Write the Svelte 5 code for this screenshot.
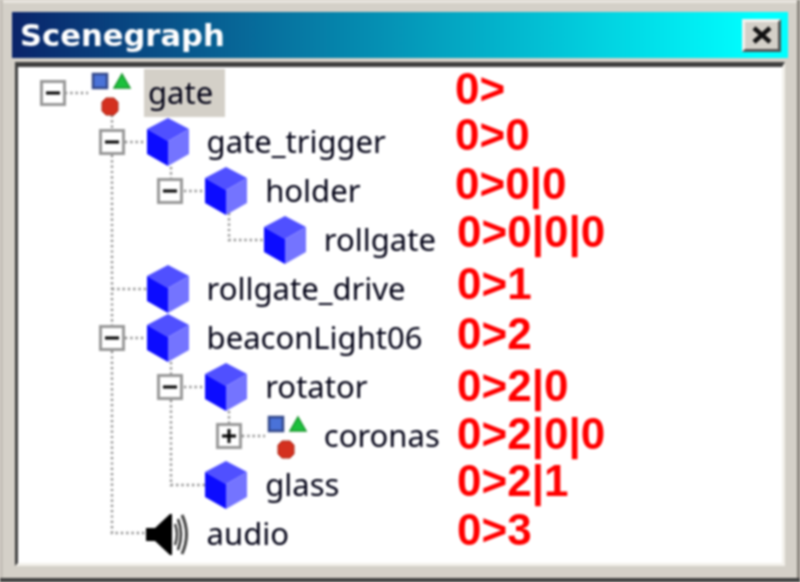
<script>
  const nodes = [
    { name: 'gate', depth: 0, toggle: 'minus', icon: 'shapes', path: '0>', h: 46, x: 0, selected: true },
    { name: 'gate_trigger', depth: 1, toggle: 'minus', icon: 'cube', path: '0>0', h: 49, x: 0 },
    { name: 'holder', depth: 2, toggle: 'minus', icon: 'cube', path: '0>0|0', h: 48, x: 0 },
    { name: 'rollgate', depth: 3, icon: 'cube', path: '0>0|0|0', h: 52, x: 2 },
    { name: 'rollgate_drive', depth: 1, icon: 'cube', path: '0>1', h: 50, x: 2 },
    { name: 'beaconLight06', depth: 1, toggle: 'minus', icon: 'cube', path: '0>2', h: 52, x: 2 },
    { name: 'rotator', depth: 2, toggle: 'minus', icon: 'cube', path: '0>2|0', h: 48, x: 2 },
    { name: 'coronas', depth: 3, toggle: 'plus', icon: 'shapes', path: '0>2|0|0', h: 47, x: 2 },
    { name: 'glass', depth: 2, icon: 'cube', path: '0>2|1', h: 49, x: 2 },
    { name: 'audio', depth: 1, icon: 'speaker', path: '0>3', h: 49, x: 2 }
  ];

  // connector dots, in window coordinates
  const lines = [
    'M65 93H88', 'M112 115V129', 'M112 155V533H146', 'M125 142H146', 'M112 289H146', 'M125 338H146',
    'M171 167V178', 'M184 191H205', 'M229 213V240H263',
    'M171 362V374', 'M184 387H205', 'M171 400V485H205',
    'M229 411V423', 'M242 436H265'
  ];
</script>

<div class="window">
  <header class="titlebar">
    <span class="title">Scenegraph</span>
    <button class="close" aria-label="Close">
      <svg width="22" height="18" viewBox="0 0 22 18"><path d="M3 2l16 14M19 2L3 16" stroke="#111" stroke-width="4.5" fill="none" /></svg>
    </button>
  </header>

  <div class="panel">
    <svg class="lines" width="764" height="496" viewBox="18 67 764 496">
      {#each lines as d}
        <path {d} fill="none" stroke="#8c8c8c" stroke-width="2.4" stroke-dasharray="2.2 3.1" />
      {/each}
    </svg>

    <div class="tree">
      {#each nodes as node}
        <div class="row" style="padding-left: {22 + node.depth * 58.6}px">
          <span class="toggle" class:empty={!node.toggle}>
            {#if node.toggle}
              <svg width="20" height="20" viewBox="0 0 20 20">
                <path d="M3 10h14" stroke="#000" stroke-width="3" />
                {#if node.toggle === 'plus'}<path d="M10 3v14" stroke="#000" stroke-width="3" />{/if}
              </svg>
            {/if}
          </span>
          <span class="icon">
            {#if node.icon === 'cube'}
              <svg width="46" height="50" viewBox="0 0 46 50">
                <path d="M23 1L44 12L23 24L2 12Z" fill="#5050ff" />
                <path d="M2 12L23 24V49L2 37Z" fill="#0c0cff" />
                <path d="M44 12L23 24V49L44 37Z" fill="#7474ff" />
              </svg>
            {:else if node.icon === 'shapes'}
              <svg width="46" height="46" viewBox="0 0 46 46">
                <rect x="7" y="4" width="14" height="14" fill="#4a72d8" stroke="#33488a" stroke-width="2.5" />
                <path d="M36 4L44 18H28Z" fill="#1cc03c" stroke="#18962c" stroke-width="1.5" />
                <path d="M20 28h8l4 4v9l-4 4h-8l-4-4v-9Z" fill="#d4301f" stroke="#a82818" stroke-width="1" />
              </svg>
            {:else}
              <svg width="46" height="46" viewBox="0 0 46 46">
                <path d="M1 17H10L25 3H27V44H25L10 30H1Z" fill="#000" />
                <path d="M30 13Q34 23 30 34" fill="none" stroke="#444" stroke-width="2.5" />
                <path d="M33 8Q39 23 33 39" fill="none" stroke="#333" stroke-width="2.5" />
                <path d="M37 4Q46 23 37 43" fill="none" stroke="#444" stroke-width="3" />
              </svg>
            {/if}
          </span>
          <span class="label" class:selected={node.selected}>{node.name}</span>
        </div>
      {/each}
    </div>

    <div class="paths">
      {#each nodes as node}
        <div class="path" style="height: {node.h}px; padding-left: {node.x}px">{node.path}</div>
      {/each}
    </div>
  </div>
</div>

<style>
  :global(body) {
    margin: 0;
    background: #d4d0c8;
  }

  .window {
    width: 800px;
    height: 582px;
    box-sizing: border-box;
    padding: 12px 12px 16px;
    background: #d4d0c8;
    display: flex;
    flex-direction: column;
    gap: 4px;
    box-shadow: inset 0 -4px 0 #404040, inset -3px 0 0 #8a867e, inset 3px 0 0 #c4c0b8, inset 0 3px 0 #e8e5de;
    filter: blur(0.8px);
    overflow: hidden;
  }

  .titlebar {
    height: 46px;
    flex: none;
    display: flex;
    align-items: center;
    justify-content: space-between;
    padding: 0 7px 0 8px;
    background: linear-gradient(90deg, #0a246a, #00ffff 96%);
  }

  .title {
    color: #fff;
    font: bold 30.6px "DejaVu Sans", sans-serif;
  }

  .close {
    width: 39px;
    height: 33px;
    padding: 0;
    display: flex;
    align-items: center;
    justify-content: center;
    background: #d4d0c8;
    border: 3px solid;
    border-color: #f4f2ee #555 #555 #f4f2ee;
  }

  .panel {
    flex: 1;
    position: relative;
    display: flex;
    background: #fff;
    border-style: solid;
    border-width: 5px 3px 3px 3px;
    border-color: #404040 #f2f0ea #f2f0ea #404040;
    margin: 0 3px;
  }

  .lines {
    position: absolute;
    top: 0;
    left: 0;
  }

  .tree {
    position: relative;
    width: 437px;
    flex: none;
    padding-top: 1px;
  }

  .row {
    height: 49px;
    display: flex;
    align-items: center;
    font: 31px "Noto Sans", sans-serif;
    color: #000014;
  }

  .toggle {
    width: 26px;
    height: 26px;
    box-sizing: border-box;
    flex: none;
    display: flex;
    align-items: center;
    justify-content: center;
    background: #fff;
    border: 3px solid #999;
  }

  .toggle.empty {
    visibility: hidden;
  }

  .icon {
    width: 46px;
    height: 50px;
    margin-left: 20px;
    flex: none;
    display: flex;
    align-items: center;
    justify-content: center;
  }

  .label {
    margin-left: 12px;
    height: 48px;
    line-height: 46px;
    padding: 0 4px;
  }

  .label.selected {
    padding-right: 12px;
    background: #d4d0c8;
  }

  .paths {
    padding-top: 1px;
  }

  .path {
    box-sizing: border-box;
    color: #ff0000;
    font: bold 44px/42px "Liberation Sans", sans-serif;
    white-space: nowrap;
  }
</style>
